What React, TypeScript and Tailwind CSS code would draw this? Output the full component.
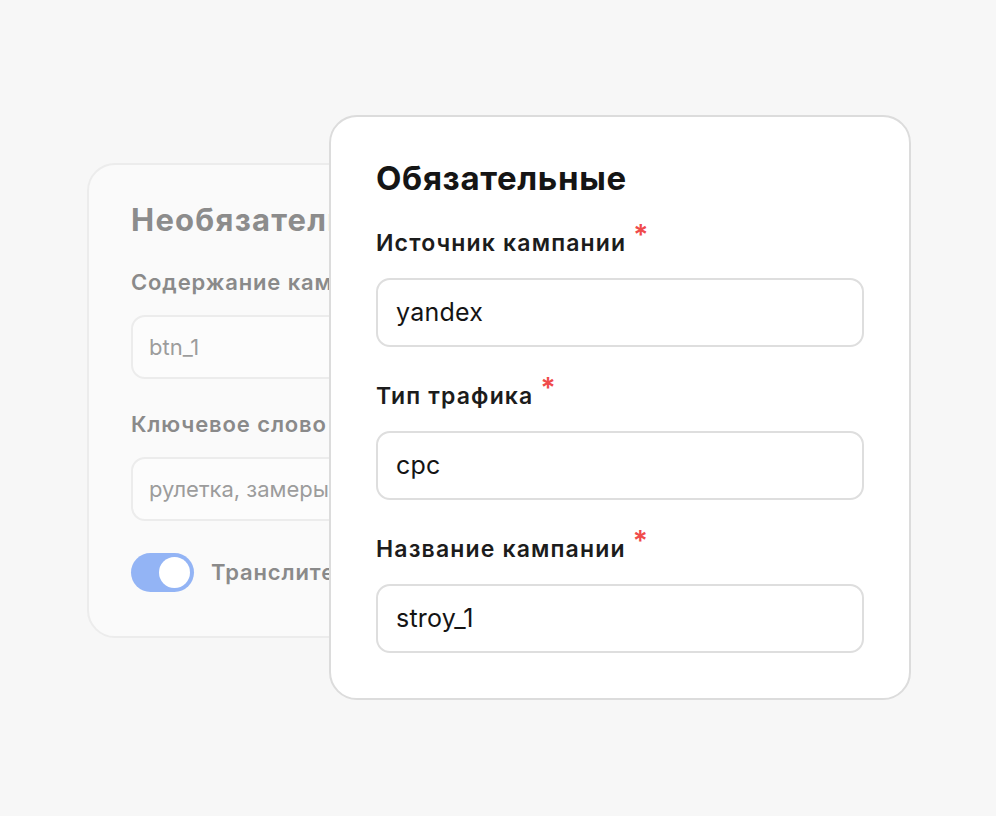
const font = { fontFamily: 'Inter, "Noto Sans", sans-serif' };

function BackField({ label, value }: { label: string; value: string }) {
  return (
    <div>
      <div className="text-[22px] leading-[28px] font-semibold tracking-[0.04em] text-[#8a8a8a] whitespace-nowrap">{label}</div>
      <div className="mt-[19px] h-[64px] w-[440px] rounded-[14px] border-2 border-[#ececec] bg-[#fcfcfc] flex items-center px-[16px] text-[22px] text-[#9c9c9c] whitespace-nowrap">
        {value}
      </div>
    </div>
  );
}

function Field({ label, value, first }: { label: string; value: string; first?: boolean }) {
  return (
    <div className={first ? 'mt-[31px]' : 'mt-[35px]'}>
      <div className="flex items-start text-[23px] leading-[28px] font-semibold tracking-[0.05em] text-[#1c1c1c]">
        <span>{label}</span>
        <span className="ml-[7px] -mt-[8px] text-[28px] text-[#f04b4b]">*</span>
      </div>
      <div className="mt-[21px] h-[69px] rounded-[14px] border-2 border-[#dedede] bg-white flex items-center px-[18px] text-[25px] tracking-[0.01em] text-[#141414]">
        {value}
      </div>
    </div>
  );
}

export default function App() {
  return (
    <div className="relative w-full h-screen bg-[#f7f7f7] overflow-hidden" style={font}>
      {/* Back card, partly covered */}
      <div className="absolute left-[87px] top-[163px] w-[520px] h-[475px] rounded-[28px] border-2 border-[#ececec] bg-[#fafafa] pl-[42px] pt-[36px]">
        <div className="text-[31px] leading-[38px] font-bold tracking-[0.04em] text-[#8c8c8c] whitespace-nowrap">Необязательные</div>
        <div className="mt-[29px]">
          <BackField label="Содержание кампании" value="btn_1" />
        </div>
        <div className="mt-[31px]">
          <BackField label="Ключевое слово" value="рулетка, замеры" />
        </div>
        <div className="mt-[32px] flex items-center gap-[17px]">
          <div className="w-[63px] h-[39px] rounded-full bg-[#93b4f5] flex items-center justify-end pr-[4px]">
            <div className="w-[31px] h-[31px] rounded-full bg-white" />
          </div>
          <span className="text-[22px] font-semibold tracking-[0.04em] text-[#8a8a8a] whitespace-nowrap">Транслитерация</span>
        </div>
      </div>

      {/* Front card */}
      <div className="absolute left-[329px] top-[115px] w-[582px] rounded-[28px] border-2 border-[#dcdcdc] bg-white px-[45px] pt-[41px] pb-[45px]">
        <div className="text-[33px] leading-[40px] font-bold tracking-[0.02em] text-[#151515]">Обязательные</div>
        <Field first label="Источник кампании" value="yandex" />
        <Field label="Тип трафика" value="cpc" />
        <Field label="Название кампании" value="stroy_1" />
      </div>
    </div>
  );
}
